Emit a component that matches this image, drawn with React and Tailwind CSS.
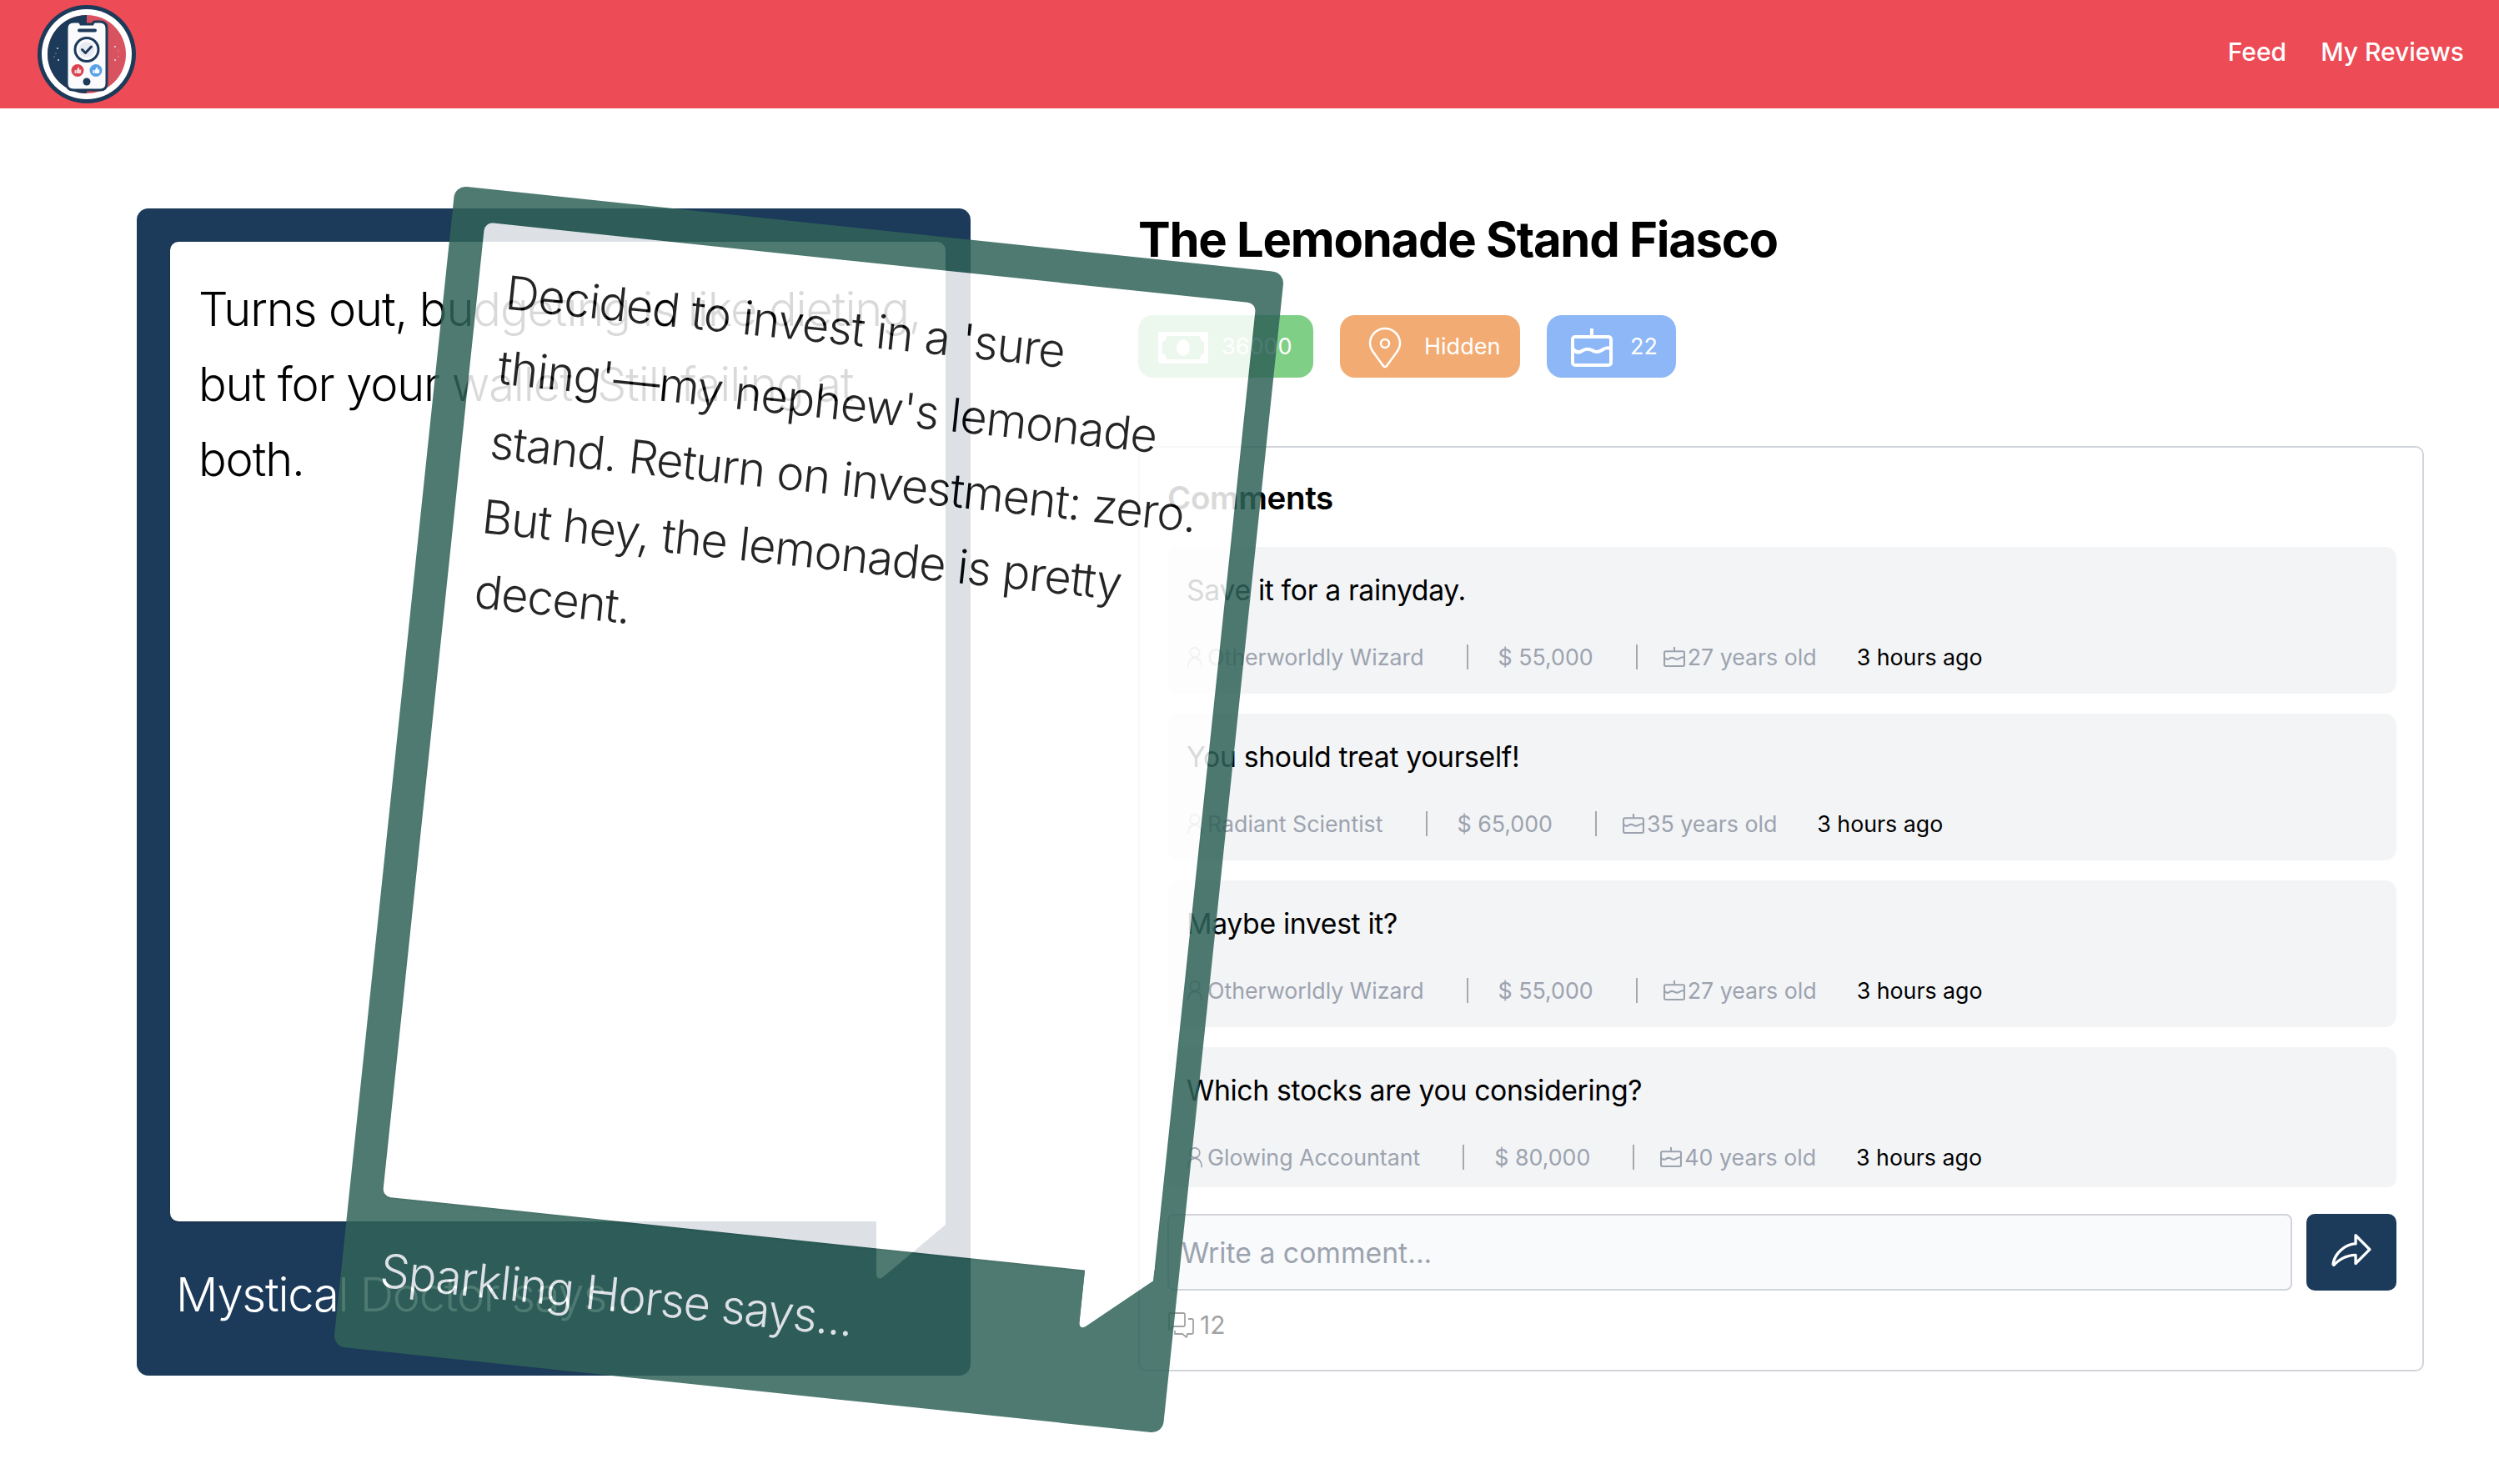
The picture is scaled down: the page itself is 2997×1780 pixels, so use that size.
import React from 'react';
import { PiShareFat } from 'react-icons/pi';

const comments = [
    { text: 'Save it for a rainyday.', name: 'Otherworldly Wizard', salary: '55,000', age: 27 },
    { text: 'You should treat yourself!', name: 'Radiant Scientist', salary: '65,000', age: 35 },
    { text: 'Maybe invest it?', name: 'Otherworldly Wizard', salary: '55,000', age: 27 },
    { text: 'Which stocks are you considering?', name: 'Glowing Accountant', salary: '80,000', age: 40 },
];

function Logo() {
    return (
        <svg viewBox="0 0 120 120" className="w-[120px] h-[120px]">
            <circle cx="60" cy="60" r="59" fill="#1c3a59" />
            <circle cx="60" cy="60" r="54" fill="#ffffff" />
            <circle cx="60" cy="60" r="47" fill="#d9525f" />
            <path d="M60 13a47 47 0 0 0 0 94z" fill="#1c3a59" />
            <path d="M44 21h6q2 0 3 3h14q1-3 3-3h6q8 0 8 8v66q0 8-8 8H44q-8 0-8-8V29q0-8 8-8z" fill="#fbfbfd" stroke="#1c3a59" strokeWidth="3" />
            <rect x="49" y="29.5" width="23" height="4" rx="2" fill="#1c3a59" />
            <circle cx="60" cy="54.5" r="14" fill="#fbfbfd" stroke="#1c3a59" strokeWidth="3" />
            <circle cx="60" cy="54.5" r="9.5" fill="#e8ebf2" />
            <path d="M54.5 54.5l4 4 7-7.5" fill="none" stroke="#1c3a59" strokeWidth="3" strokeLinecap="round" strokeLinejoin="round" />
            <circle cx="49" cy="79.5" r="7.5" fill="#d9434f" />
            <circle cx="71" cy="79.5" r="7.5" fill="#5aa2e8" />
            <path d="M45.5 79h2v4h-2zM48 79l2-3.5q1.500 0 1 3h2.500l-.7 4.500H48z" fill="#f6d9d9" />
            <path d="M67.500 79h2v4h-2zM70 79l2-3.500q1.500 0 1 3h2.500l-.7 4.500H70z" fill="#ffffff" />
            <circle cx="60" cy="93" r="4.500" fill="#1c3a59" />
            <g fill="#dfe6ee">
                <circle cx="25" cy="53" r="1" /><circle cx="23" cy="59" r=".6" /><circle cx="26" cy="67" r="1" /><circle cx="21" cy="63" r=".6" />
                <circle cx="94" cy="51" r="1" /><circle cx="98" cy="56" r=".6" /><circle cx="94" cy="67" r="1" /><circle cx="98" cy="63" r=".6" />
            </g>
        </svg>
    );
}

function MoneyIcon() {
    return (
        <svg viewBox="0 0 60 38" className="w-[60px] h-[38px]" fill="#ffffff">
            <path fillRule="evenodd" d="M2 0h56q2 0 2 2v34q0 2-2 2H2q-2 0-2-2V2q0-2 2-2zm8 5q0 6-5 7v14q5 1 5 7h40q0-6 5-7V12q-5-1-5-7z" />
            <ellipse cx="30" cy="19" rx="8" ry="10" />
        </svg>
    );
}

function PinIcon() {
    return (
        <svg viewBox="0 0 40 50" className="w-[40px] h-[50px]" fill="none" stroke="#ffffff" strokeWidth="2.500">
            <path d="M20 2C10 2 2 10 2 20c0 4 1 6 3 9l13 18q2 2 4 0l13-18c2-3 3-5 3-9C38 10 30 2 20 2z" />
            <circle cx="20" cy="20" r="5" />
        </svg>
    );
}

function CakeIcon({ className, strokeWidth = 4 }) {
    return (
        <svg viewBox="0 0 50 46" className={className} fill="none" stroke="currentColor" strokeWidth={strokeWidth} strokeLinejoin="round">
            <path d="M25 0v10" />
            <rect x="2" y="10" width="46" height="34" rx="3" />
            <path d="M2 24q5 7 11 3t12-1q6 4 12 0t11-2" />
        </svg>
    );
}

function UserIcon() {
    return (
        <svg viewBox="0 0 24 32" className="w-[20px] h-[27px] shrink-0" fill="none" stroke="currentColor" strokeWidth="2">
            <circle cx="12" cy="9" r="7" />
            <path d="M2 30c0-8 4-13 10-13s10 5 10 13" />
        </svg>
    );
}

function ChatsIcon() {
    return (
        <svg viewBox="0 0 32 32" className="w-[32px] h-[32px] shrink-0" fill="none" stroke="currentColor" strokeWidth="1.800" strokeLinejoin="round">
            <path d="M3 1h16q2 0 2 2v12q0 2-2 2H7l-5 4V3q0-2 1-2z" />
            <path d="M25 8h4q2 0 2 2v14q0 2-2 2h-5l-1 4-5-4H9v-4" />
        </svg>
    );
}

// speech bubble card, the two stacked cards share it
function StoryCard({ text, author, className }) {
    return (
        <div className={`w-[1000px] h-[1400px] bg-[#1c3a59] rounded-[14px] pt-[40px] pl-[40px] pr-[30px] flex flex-col ${className}`}>
            <div className="relative h-[1175px] bg-white rounded-[10px] pl-[34px] pr-[4px] pt-[36px] shadow-sm">
                <p className="text-[56px] leading-[90px] font-light tracking-[-0.02em] text-black">{text}</p>
                <svg viewBox="0 0 83 85" className="absolute right-0 top-full -mt-[12px] w-[83px] h-[85px]">
                    <path d="M0 0H83V16L9 78Q2 84 0 76Z" fill="#ffffff" />
                </svg>
            </div>
            <div className="flex-1 flex items-center pl-[7px] pb-[10px]">
                <p className="text-[56px] font-light tracking-[-0.022em] text-white">{author}</p>
            </div>
        </div>
    );
}

function CommentRow({ comment }) {
    return (
        <div className="h-[176px] shrink-0 bg-[#f3f4f6] rounded-[14px] pl-[23px] pt-[30px]">
            <p className="text-[33.75px] leading-[44px] tracking-[-0.01em] text-black">{comment.text}</p>
            <div className="mt-[40px] flex items-center text-[26.75px] leading-[36px] text-[#9ca3af]">
                <UserIcon />
                <span className="ml-[5px]">{comment.name}</span>
                <span className="ml-[51px] w-[2px] h-[30px] bg-[#a8a8a8]"></span>
                <span className="ml-[36px]">$ {comment.salary}</span>
                <span className="ml-[51px] w-[2px] h-[30px] bg-[#a8a8a8]"></span>
                <CakeIcon className="ml-[31px] w-[26px] h-[24px] shrink-0" strokeWidth={4} />
                <span className="ml-[3px]">{comment.age} years old</span>
                <span className="ml-[48px] text-black">3 hours ago</span>
            </div>
        </div>
    );
}

export default function App() {
    return (
        <div className="min-h-screen bg-white font-['Inter',sans-serif]">
            <header className="h-[130px] bg-[#ed4b56] flex items-center justify-between pl-[44px] pr-[42px]">
                <Logo />
                <nav className="flex items-center gap-[41px] text-[30px] font-medium text-white pb-[6px]">
                    <span>Feed</span>
                    <span>My Reviews</span>
                </nav>
            </header>

            <main className="flex pl-[164px] pr-[90px] pt-[120px]">
                <div className="relative w-[1000px] shrink-0">
                    <StoryCard
                        text="Turns out, budgeting is like dieting, but for your wallet. Still failing at both."
                        author="Mystical Doctor says..."
                    />
                    {/* second card lies over the first one and over the comments */}
                    <StoryCard
                        className="absolute left-[306px] top-[21px] z-10 rotate-[6deg] opacity-85 bg-[#306359]"
                        text={"Decided to invest in a 'sure thing'—\u2060my nephew's lemonade stand. Return on investment: zero. But hey, the lemonade is pretty decent."}
                        author="Sparkling Horse says..."
                    />
                </div>

                <section className="ml-[201px] flex-1">
                    <h1 className="text-[58px] leading-[80px] -mt-[3px] font-bold tracking-[-0.022em] text-black">The Lemonade Stand Fiasco</h1>
                    <div className="mt-[51px] flex gap-[32px] text-[27px] text-white">
                        <div className="h-[75px] w-[210px] pt-[2px] rounded-[18px] bg-[#80cf87] flex items-center pl-[24px] gap-[16px]">
                            <MoneyIcon />
                            <span>36000</span>
                        </div>
                        <div className="h-[75px] w-[216px] pt-[2px] rounded-[18px] bg-[#f2ac73] flex items-center pl-[34px] gap-[27px]">
                            <PinIcon />
                            <span>Hidden</span>
                        </div>
                        <div className="h-[75px] w-[155px] pt-[2px] rounded-[18px] bg-[#8db7f6] flex items-center pl-[29px] gap-[21px]">
                            <CakeIcon className="w-[50px] h-[46px]" />
                            <span>22</span>
                        </div>
                    </div>

                    <div className="mt-[82px] h-[1110px] border-2 border-[#d1d5db] rounded-[10px] pl-[33px] pr-[31px] pt-[30px]">
                        <h2 className="text-[38.5px] leading-[60px] font-semibold tracking-[-0.01em] text-black">Comments</h2>
                        <div className="mt-[29px] h-[768px] overflow-hidden rounded-[10px] flex flex-col gap-[24px]">
                            {comments.map((c, idx) => <CommentRow key={idx} comment={c} />)}
                        </div>
                        <div className="mt-[32px] flex gap-[17px]">
                            <input
                                readOnly
                                placeholder="Write a comment..."
                                className="flex-1 h-[92px] bg-[#f9fafb] border-2 border-[#d1d5db] rounded-[8px] px-[15px] text-[33.75px] placeholder:text-[#9ca3af]"
                            />
                            <button className="w-[108px] h-[92px] bg-[#1c3a59] rounded-[10px] flex items-center justify-center text-white">
                                <PiShareFat size={54} />
                            </button>
                        </div>
                        <div className="mt-[19px] flex items-center gap-[7px] text-[30px] text-[#a3a3a3]">
                            <ChatsIcon />
                            <span>12</span>
                        </div>
                    </div>
                </section>
            </main>
        </div>
    );
}
